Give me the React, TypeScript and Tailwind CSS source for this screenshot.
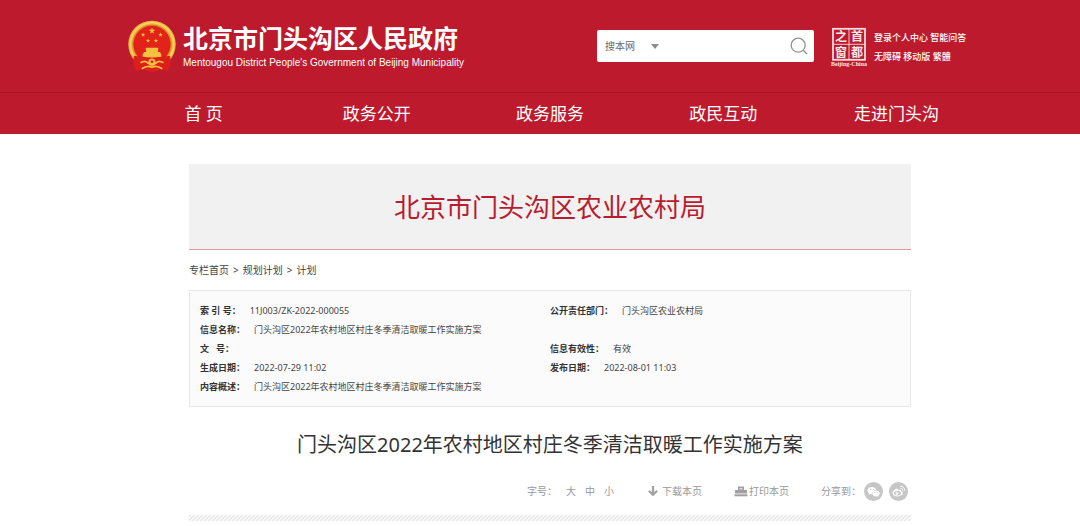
const NAV_ITEMS = ['首 页', '政务公开', '政务服务', '政民互动', '走进门头沟']

const TITLE = '门头沟区2022年农村地区村庄冬季清洁取暖工作实施方案'

const INFO_ROWS = [
  [
    { label: '索 引 号：', value: '11J003/ZK-2022-000055' },
    { label: '公开责任部门：', value: '门头沟区农业农村局' },
  ],
  [{ label: '信息名称：', value: TITLE }],
  [
    { label: '文   号：', value: '' },
    { label: '信息有效性：', value: '有效' },
  ],
  [
    { label: '生成日期：', value: '2022-07-29 11:02' },
    { label: '发布日期：', value: '2022-08-01 11:03' },
  ],
  [{ label: '内容概述：', value: TITLE }],
]

const STAR = 'M0 -10 L2.4 -3.2 L9.5 -3.1 L3.8 1.2 L5.9 8.1 L0 4 L-5.9 8.1 L-3.8 1.2 L-9.5 -3.1 L-2.4 -3.2 Z'

function Emblem() {
  return (
    <svg viewBox="36 28 150 158" className="h-[52px] w-[50px] shrink-0" aria-hidden="true">
      <circle cx="111" cy="102" r="72" fill="#f0b93c" />
      <circle cx="111" cy="102" r="66" fill="none" stroke="#f8d060" strokeWidth="5" />
      <circle cx="111" cy="102" r="59" fill="none" stroke="#d0902c" strokeWidth="3" />
      <circle cx="111" cy="102" r="57" fill="#e2231a" />
      <g fill="#f5c13f">
        <path d={STAR} transform="translate(111 61) scale(1.05)" />
        <path d={STAR} transform="translate(84 73) scale(0.7)" />
        <path d={STAR} transform="translate(137 73) scale(0.7)" />
        <path d={STAR} transform="translate(99 91) scale(0.7)" />
        <path d={STAR} transform="translate(123 91) scale(0.7)" />
        <path d="M94 112h34l4 5h-3v8h7v5h3v9H83v-9h3v-5h7v-8h-3z" />
      </g>
      <path d="M56 137 Q111 148 166 137 L168 164 L158 183 L140 178 Q111 192 82 178 L64 183 L54 164 Z" fill="#dc1f1c" />
      <path d="M83 134 H139 V140 Q111 144 83 140 Z" fill="#f5c13f" />
      <circle cx="111" cy="156" r="11" fill="#f0b93c" />
      <path
        d="M76 158 Q92 148 100 160 Q111 168 122 160 Q130 148 146 158 M80 176 Q98 164 111 172 Q124 164 142 176"
        fill="none"
        stroke="#f5c13f"
        strokeWidth="5"
      />
      <circle cx="111" cy="155" r="4" fill="#dc1f1c" />
    </svg>
  )
}

function CapitalWindow() {
  return (
    <svg viewBox="0 0 38 40" className="h-10 w-[38px] shrink-0" role="img" aria-label="首都之窗">
      <rect x="3" y="1.8" width="32" height="31" fill="none" stroke="#f8dcdf" strokeWidth="1.8" />
      <path d="M19 2V33M3 17.3H35" stroke="#f8dcdf" strokeWidth="0.9" />
      <g fill="#fbe8ea" fontSize="12" fontWeight="700" textAnchor="middle" fontFamily="'Noto Sans CJK SC', sans-serif">
        <text x="11" y="14">之</text>
        <text x="27" y="14">首</text>
        <text x="11" y="29.5">窗</text>
        <text x="27" y="29.5">都</text>
      </g>
      <text
        x="19"
        y="38.5"
        fill="#fbe8ea"
        fontSize="6"
        fontWeight="700"
        textAnchor="middle"
        fontFamily="'Liberation Serif', serif"
      >
        Beijing-China
      </text>
    </svg>
  )
}

function DownloadIcon() {
  return (
    <svg viewBox="0 0 10 10" className="size-2.5" aria-hidden="true">
      <path d="M5 0V8.5M0.9 4.8L5 8.8L9.1 4.8" fill="none" stroke="#a3a3a3" strokeWidth="2.3" />
    </svg>
  )
}

function PrintIcon() {
  return (
    <svg viewBox="0 0 14 11" className="h-[11px] w-3.5" fill="#a0a0a0" aria-hidden="true">
      <path d="M4 0.5h6v4H4z" />
      <path d="M1 4h12v3.500H1z" />
      <path d="M0.5 8.300h13v2H0.500z" />
      <path d="M5.500 2h3v1.500h-3z" fill="#ddd" />
    </svg>
  )
}

function WechatIcon() {
  return (
    <svg viewBox="0 0 19 19" className="size-[19px]" aria-hidden="true">
      <circle cx="9.5" cy="9.5" r="9.5" fill="#c6c6c6" />
      <path d="M8 5c-2.600 0-4.500 1.600-4.500 3.600 0 1.200.6 2.100 1.600 2.800l-.5 1.500 1.800-.9c.5.1 1 .2 1.600.2 0-2.500 1.900-4 4.400-4C12 6.300 10.200 5 8 5z" fill="#fff" />
      <path d="M12 8.600c-2.100 0-3.700 1.300-3.700 2.900s1.600 2.900 3.700 2.900c.4 0 .9-.1 1.300-.2l1.300.7-.3-1.200c.9-.6 1.400-1.300 1.400-2.200 0-1.600-1.600-2.900-3.700-2.900z" fill="#fff" />
      <g fill="#c6c6c6">
        <circle cx="6.500" cy="7.600" r=".6" />
        <circle cx="9.500" cy="7.600" r=".6" />
        <circle cx="10.800" cy="10.800" r=".5" />
        <circle cx="13.200" cy="10.800" r=".5" />
      </g>
    </svg>
  )
}

function WeiboIcon() {
  return (
    <svg viewBox="0 0 19 19" className="size-[19px]" aria-hidden="true">
      <circle cx="9.5" cy="9.5" r="9.5" fill="#c6c6c6" />
      <path d="M7.600 6.700C5.900 7 3.500 9.200 3.500 11.200c0 2 2.400 3.300 5 3.300 3.300 0 5.300-1.800 5.300-3.400 0-1-.8-1.500-1.500-1.700.5-1.200-.5-1.900-2.800-1 .3-1.200-.4-1.900-1.900-1.700z" fill="#fff" />
      <ellipse cx="8.500" cy="11.300" rx="3.400" ry="2.200" fill="#c6c6c6" />
      <circle cx="8" cy="11.500" r="1.300" fill="#fff" />
      <path d="M11.600 4.500c2.500-.5 4.400 1.500 3.700 3.900M11.800 6.500c1.200-.2 2 .6 1.700 1.700" fill="none" stroke="#fff" strokeWidth="1" strokeLinecap="round" />
    </svg>
  )
}

function Header() {
  return (
    <header className="bg-[#bd1a2d] pl-5 text-white">
      <div className="mx-auto flex h-[92px] max-w-[866px] items-center pr-[15px] pl-2.5">
        <a href="#" className="flex items-center gap-1.5">
          <Emblem />
          <span className="flex flex-col gap-[3px] pt-[3px]">
            <span className="text-[25px] leading-7 font-bold whitespace-nowrap">北京市门头沟区人民政府</span>
            <span className="font-['Liberation_Sans',Arial,sans-serif] text-[10px] leading-4 whitespace-nowrap">
              Mentougou District People's Government of Beijing Municipality
            </span>
          </span>
        </a>

        <form className="ml-auto flex h-8 w-[217px] items-center rounded-xs bg-white pr-1.5 pl-2 text-[10px] text-[#666]">
          <div className="relative">
            <select aria-label="搜索范围" className="w-14 appearance-none bg-transparent leading-4 outline-none">
              <option>搜本网</option>
            </select>
            <svg viewBox="0 0 8 5" className="pointer-events-none absolute top-1.5 right-0.5 h-[5px] w-2" aria-hidden="true">
              <path d="M0 0h8L4 5z" fill="#8c8c8c" />
            </svg>
          </div>
          <input type="text" aria-label="搜索" className="min-w-0 flex-1 bg-transparent px-2 outline-none" />
          <button type="submit" aria-label="提交搜索">
            <svg viewBox="0 0 18 18" className="size-[18px]" fill="none" stroke="#8f8f8f" strokeWidth="1.300" aria-hidden="true">
              <circle cx="8.200" cy="8.200" r="7" />
              <path d="M13.200 13.200L17 17" />
            </svg>
          </button>
        </form>

        <div className="ml-4 flex items-center gap-1.5 pt-0.5">
          <CapitalWindow />
          <div className="w-[94px] text-[9px] leading-[19px] font-medium whitespace-nowrap">
            <p>
              <a href="#">登录个人中心</a> <a href="#">智能问答</a>
            </p>
            <p>
              <a href="#">无障碍</a> <a href="#">移动版</a> <a href="#">繁體</a>
            </p>
          </div>
        </div>
      </div>

      <nav className="-ml-5 border-t border-[#a81626] pl-5">
        <ul className="mx-auto grid h-[41px] max-w-[866px] grid-cols-5 items-center text-center text-[17px]">
          {NAV_ITEMS.map(item => (
            <li key={item}>
              <a href="#">{item}</a>
            </li>
          ))}
        </ul>
      </nav>
    </header>
  )
}

function InfoPanel() {
  return (
    <dl className="border border-[#e8e8e8] bg-[#fbfbfb] p-2.5 text-[9px] leading-[19px] text-[#444]">
      {INFO_ROWS.map(row => (
        <div key={row[0].label} className="grid grid-cols-2">
          {row.map(({ label, value }) => (
            <div key={label} className="flex gap-[9px] whitespace-pre">
              <dt className="font-bold text-[#333]">{label}</dt>
              <dd>{value}</dd>
            </div>
          ))}
        </div>
      ))}
    </dl>
  )
}

function Toolbar() {
  return (
    <div className="flex h-5 items-center justify-end pr-[3px] text-[10px] text-[#999]">
      <div className="flex">
        <span className="mr-[9px]">字号：</span>
        <div className="flex gap-[9px]">
          <button type="button">大</button>
          <button type="button">中</button>
          <button type="button">小</button>
        </div>
      </div>
      <button type="button" className="ml-[34px] flex items-center gap-1">
        <DownloadIcon />
        下载本页
      </button>
      <button type="button" className="ml-8 flex items-center gap-px">
        <PrintIcon />
        打印本页
      </button>
      <div className="ml-8 flex items-center">
        <span className="mr-[3px]">分享到：</span>
        <div className="flex gap-1.5">
          <a href="#" aria-label="微信">
            <WechatIcon />
          </a>
          <a href="#" aria-label="微博">
            <WeiboIcon />
          </a>
        </div>
      </div>
    </div>
  )
}

export default function App() {
  return (
    <div className="min-h-screen bg-white font-['Noto_Sans','Noto_Sans_CJK_SC',sans-serif]" lang="zh-CN">
      <Header />

      <main className="pt-[30px] pl-5">
        <div className="mx-auto max-w-[722px]">
          <div className="flex h-[86px] items-center justify-center border-b border-[#e8959f] bg-[#f1f1f1] pt-0.5">
            <h2 className="text-[26px] text-[#b81c2e]">北京市门头沟区农业农村局</h2>
          </div>

          <nav className="flex h-10 items-center gap-1 text-[10px] text-[#444]">
            <a href="#">专栏首页</a>
            <span>&gt;</span>
            <a href="#">规划计划</a>
            <span>&gt;</span>
            <a href="#">计划</a>
          </nav>

          <InfoPanel />

          <h1 className="pt-[23px] pb-[21px] text-center text-[20px] leading-[30px] text-[#333]">{TITLE}</h1>

          <Toolbar />

          {/* hatched divider */}
          <div className="mt-3.5 h-1.5 bg-[linear-gradient(135deg,#e8e8e8_25%,#fafafa_25%,#fafafa_50%,#e8e8e8_50%,#e8e8e8_75%,#fafafa_75%)] bg-[size:4px_4px]" />
        </div>
      </main>
    </div>
  )
}
